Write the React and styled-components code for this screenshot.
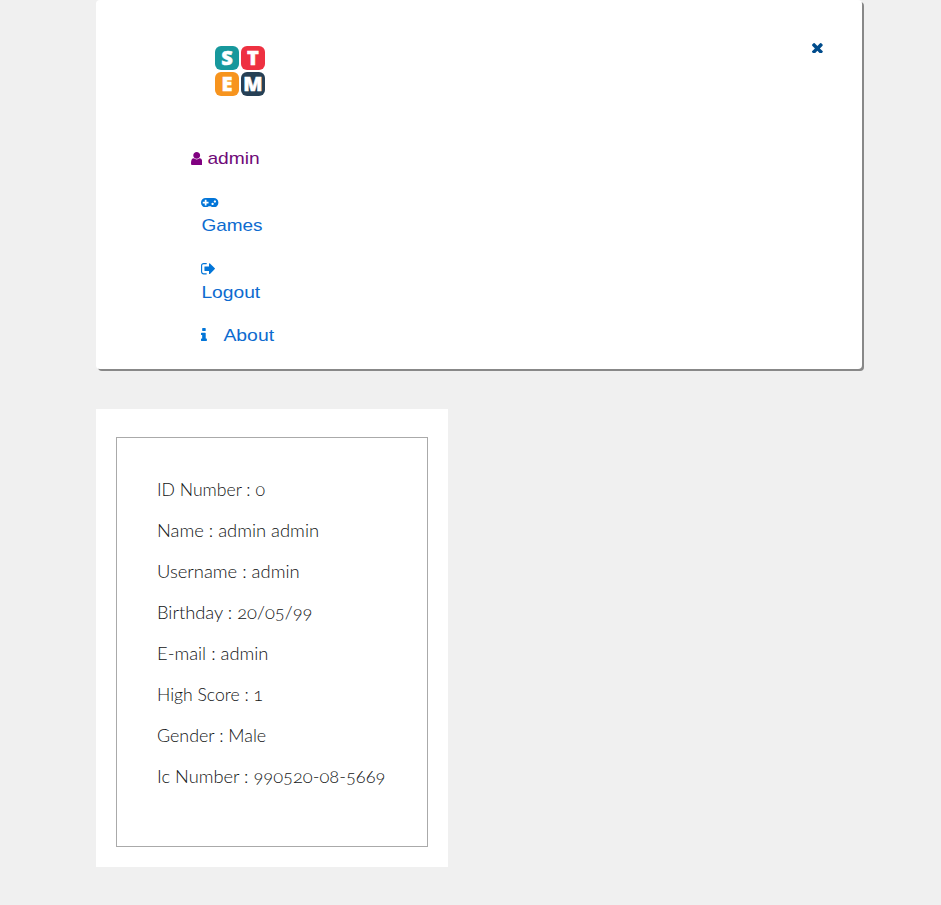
import React from "react";
import styled, { createGlobalStyle } from "styled-components";

const GlobalStyle = createGlobalStyle`
  *, *::before, *::after { box-sizing: border-box; }
  body { margin: 0; background: #f0f0f0; }
`;

const Page = styled.div`
  min-height: 905px;
  padding-left: 96px;
  display: flex;
  flex-direction: column;
  align-items: flex-start;
  gap: 40px;
`;

const Header = styled.header`
  width: 766px;
  height: 369px;
  display: flex;
  justify-content: space-between;
  align-items: flex-start;
  padding: 46px 39px 0 95px;
  background: #fff;
  border-radius: 4px;
  box-shadow: 2px 2px 0 #888;
`;

const Navigation = styled.nav`
  display: flex;
  flex-direction: column;
  align-items: flex-start;
`;

const Logo = styled.div`
  display: grid;
  grid-template-columns: 24px 24px;
  grid-auto-rows: 24px;
  gap: 2px;
  margin: 0 0 50px 24px;
`;

const Tile = styled.span`
  display: flex;
  align-items: center;
  justify-content: center;
  border-radius: 6px;
  background: ${(p) => p.$color};
  color: #fff;
  font: 800 20px/24px "Open Sans", sans-serif;
  -webkit-text-stroke: 0.5px #fff;
`;

const Entry = styled.a`
  display: flex;
  flex-direction: ${(p) => (p.$stacked ? "column" : "row")};
  align-items: ${(p) => (p.$stacked ? "flex-start" : "center")};
  height: ${(p) => (p.$stacked ? 47 : 24)}px;
  margin: 0 0 ${(p) => p.$gap ?? 20}px ${(p) => (p.$indent ? 10.4 : 0)}px;
  color: ${(p) => (p.$visited ? "#800080" : "#0275d8")};
  text-decoration: none;
`;

const Slot = styled.span`
  display: flex;
  align-items: center;
  width: ${(p) => p.$width}px;
  height: 24px;
  padding-top: ${(p) => p.$drop || 0}px;
  padding-bottom: ${(p) => p.$lift || 0}px;
  flex: none;
`;

const Label = styled.span`
  font: 17px/23px "Liberation Sans", Arial, sans-serif;
  white-space: nowrap;
  transform: translateX(0.4px) scaleX(${(p) => p.$stretch});
  transform-origin: left;
  color: ${(p) => p.$color || "#0d6bcf"};
`;

const Glyph = styled.svg`
  display: block;
  fill: currentColor;
`;

const Close = styled.button`
  display: block;
  margin-top: -3.4px;
  padding: 0;
  border: 0;
  background: none;
  color: #014c8c;
`;

const Card = styled.main`
  width: 352px;
  height: 458px;
  padding: 28px 20px 20px;
  background: #fff;
`;

const Details = styled.div`
  height: 410px;
  padding: 31px 0 0 40px;
  border: 1px solid #aaa;
`;

const Detail = styled.p`
  margin: 0;
  width: max-content;
  height: 41px;
  font: 300 17px/41px Lato, sans-serif;
  font-feature-settings: "onum" 1;
  color: #111314;
  white-space: nowrap;
  transform: scaleX(${(p) => p.$stretch});
  transform-origin: left;
`;

const icons = {
  user: [
    "256 128 1280 1536",
    11.4,
    13.7,
    "M1536 1399q0 109-62.5 187t-150.5 78h-854q-88 0-150.5-78t-62.5-187q0-85 8.5-160.5t31.5-152 58.5-131 94-89 134.5-34.5q131 128 313 128t313-128q76 0 134.5 34.5t94 89 58.5 131 31.5 152 8.5 160.5zm-256-887q0 159-112.5 271.5t-271.5 112.5-271.5-112.5-112.5-271.5 112.5-271.5 271.5-112.5 271.5 112.5 112.5 271.5z",
  ],
  gamepad: [
    "0 512 1920 1024",
    17.4,
    9.3,
    "M832 1088v-128q0-14-9-23t-23-9h-192v-192q0-14-9-23t-23-9h-128q-14 0-23 9t-9 23v192h-192q-14 0-23 9t-9 23v128q0 14 9 23t23 9h192v192q0 14 9 23t23 9h128q14 0 23-9t9-23v-192h192q14 0 23-9t9-23zm576 64q0-53-37.5-90.5t-90.5-37.5-90.5 37.5-37.5 90.5 37.5 90.5 90.5 37.5 90.5-37.5 37.5-90.5zm256-256q0-53-37.5-90.5t-90.5-37.5-90.5 37.5-37.5 90.5 37.5 90.5 90.5 37.5 90.5-37.5 37.5-90.5zm256 128q0 212-150 362t-362 150q-192 0-338-128h-220q-146 128-338 128-212 0-362-150t-150-362 150-362 362-150h896q212 0 362 150t150 362z",
  ],
  signOut: [
    "64 256 1568 1280",
    14,
    11.4,
    "M704 1440q0 4 1 20t.5 26.5-3 23.5-10 19.5-20.5 6.5h-320q-119 0-203.5-84.5t-84.5-203.5v-704q0-119 84.5-203.5t203.5-84.5h320q13 0 22.5 9.5t9.5 22.5q0 4 1 20t.5 26.5-3 23.5-10 19.5-20.5 6.5h-320q-66 0-113 47t-47 113v704q0 66 47 113t113 47h312l11.5 1 11.5 3 8 5.5 7 9 2 13.5zm928-544q0 26-19 45l-544 544q-19 19-45 19t-45-19-19-45v-288h-448q-26 0-45-19t-19-45v-384q0-26 19-45t45-19h448v-288q0-26 19-45t45-19 45 19l544 544q19 19 19 45z",
  ],
  info: [
    "576 128 640 1408",
    5.9,
    13,
    "M1216 1344v128q0 26-19 45t-45 19h-512q-26 0-45-19t-19-45v-128q0-26 19-45t45-19h64v-384h-64q-26 0-45-19t-19-45v-128q0-26 19-45t45-19h384q26 0 45 19t19 45v576h64q26 0 45 19t19 45zm-128-1152v192q0 26-19 45t-45 19h-256q-26 0-45-19t-19-45v-192q0-26 19-45t45-19h256q26 0 45 19t19 45z",
  ],
  times: [
    "302 366 1188 1188",
    10.8,
    10.8,
    "M1490 1322q0 40-28 68l-136 136q-28 28-68 28t-68-28l-294-294-294 294q-28 28-68 28t-68-28l-136-136q-28-28-28-68t28-68l294-294-294-294q-28-28-28-68t28-68l136-136q28-28 68-28t68 28l294 294 294-294q28-28 68-28t68 28l136 136q28 28 28 68t-28 68l-294 294 294 294q28 28 28 68z",
  ],
};

function Icon({ name }) {
  const [viewBox, width, height, d] = icons[name];
  return (
    <Glyph viewBox={viewBox} width={width} height={height} aria-hidden="true">
      <path d={d} />
    </Glyph>
  );
}

const tiles = [
  ["S", "#17989c"],
  ["T", "#ee3141"],
  ["E", "#f7941e"],
  ["M", "#264055"],
];

const details = [
  ["ID Number : 0", 1.037],
  ["Name : admin admin", 1.08],
  ["Username : admin", 1.082],
  ["Birthday : 20/05/99", 1.078],
  ["E-mail : admin", 1.078],
  ["High Score : 1", 1.035],
  ["Gender : Male", 1.052],
  ["Ic Number : 990520-08-5669", 1.075],
];

export default function App() {
  return (
    <>
      <GlobalStyle />
      <Page>
        <Header>
          <Navigation>
            <Logo>
              {tiles.map(([letter, color]) => (
                <Tile key={letter} $color={color}>{letter}</Tile>
              ))}
            </Logo>
            <Entry $visited>
              <Slot $width={16.4} $drop={1}><Icon name="user" /></Slot>
              <Label $color="#6f0a78" $stretch={1.13}>admin</Label>
            </Entry>
            <Entry $stacked $indent>
              <Slot $width={18} $drop={1}><Icon name="gamepad" /></Slot>
              <Label $stretch={1.115}>Games</Label>
            </Entry>
            <Entry $stacked $indent $gap={19}>
              <Slot $width={18}><Icon name="signOut" /></Slot>
              <Label $stretch={1.13}>Logout</Label>
            </Entry>
            <Entry $indent>
              <Slot $width={21.6} $lift={1.4}><Icon name="info" /></Slot>
              <Label $stretch={1.14}>About</Label>
            </Entry>
          </Navigation>
          <Close aria-label="Close"><Icon name="times" /></Close>
        </Header>
        <Card>
          <Details>
            {details.map(([text, stretch]) => (
              <Detail key={text} $stretch={stretch}>{text}</Detail>
            ))}
          </Details>
        </Card>
      </Page>
    </>
  );
}
